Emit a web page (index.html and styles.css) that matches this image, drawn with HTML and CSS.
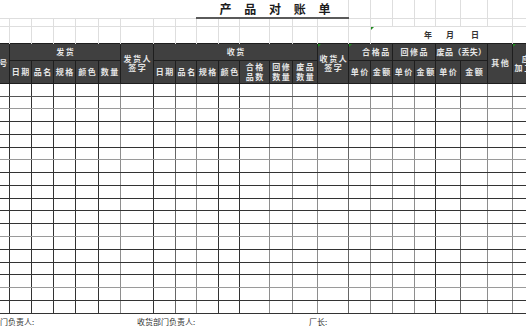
FILE: index.html
```html
<!DOCTYPE html>
<html lang="zh">
<head>
<meta charset="utf-8">
<title>产品对账单</title>
<link rel="stylesheet" href="styles.css">
</head>
<body>
<table class="sheet">
<colgroup>
<col class="w22"><col class="w22"><col class="w22"><col class="w22"><col class="w23"><col class="w22"><col class="w33"><col class="w22"><col class="w21"><col class="w22"><col class="w21"><col class="w30"><col class="w23"><col class="w25"><col class="w31"><col class="w22"><col class="w22"><col class="w22"><col class="w21"><col class="w25"><col class="w27"><col class="w25"><col class="w36">
</colgroup>
<tbody class="top">
<tr class="row-a"><td class="blank" colspan="9"></td><td class="title" colspan="6">产 品 对 账 单</td><td></td><td></td><td></td><td></td><td></td><td></td><td></td><td></td></tr>
<tr class="row-b"><td></td><td></td><td></td><td></td><td></td><td></td><td></td><td></td><td></td><td></td><td></td><td></td><td></td><td></td><td></td><td></td><td></td><td></td><td></td><td></td><td></td><td></td><td></td></tr>
<tr class="row-c"><td></td><td></td><td></td><td></td><td></td><td></td><td></td><td></td><td></td><td></td><td></td><td></td><td></td><td></td><td></td><td></td><td class="date mark" colspan="6"><span>年</span><span class="m">月</span><span class="d">日</span></td><td></td></tr>
</tbody>
<tbody class="hd">
<tr class="h1">
<td rowspan="2">序号</td>
<td colspan="5">发货</td>
<td rowspan="2">发货人<br>签字</td>
<td colspan="7">收货</td>
<td rowspan="2" class="mark">收货人<br>签字</td>
<td colspan="2" class="mark shift">合格品</td>
<td colspan="2">回修品</td>
<td colspan="2" class="tight">废品（丢失）</td>
<td rowspan="2">其他</td>
<td rowspan="2" class="mark last">应付<br>加工费用</td>
</tr>
<tr class="h2">
<td>日期</td><td>品名</td><td>规格</td><td>颜色</td><td>数量</td>
<td>日期</td><td>品名</td><td>规格</td><td>颜色</td>
<td><div class="clip">合格<br>品数<br>量</div></td>
<td>回修<br>数量</td><td>废品<br>数量</td>
<td>单价</td><td>金额</td><td>单价</td><td>金额</td><td>单价</td><td>金额</td>
</tr>
</tbody>
<tbody class="bd">
<tr><td></td><td></td><td></td><td></td><td></td><td></td><td></td><td></td><td></td><td></td><td></td><td></td><td></td><td></td><td></td><td></td><td></td><td></td><td></td><td></td><td></td><td></td><td></td></tr>
<tr><td></td><td></td><td></td><td></td><td></td><td></td><td></td><td></td><td></td><td></td><td></td><td></td><td></td><td></td><td></td><td></td><td></td><td></td><td></td><td></td><td></td><td></td><td></td></tr>
<tr><td></td><td></td><td></td><td></td><td></td><td></td><td></td><td></td><td></td><td></td><td></td><td></td><td></td><td></td><td></td><td></td><td></td><td></td><td></td><td></td><td></td><td></td><td></td></tr>
<tr><td></td><td></td><td></td><td></td><td></td><td></td><td></td><td></td><td></td><td></td><td></td><td></td><td></td><td></td><td></td><td></td><td></td><td></td><td></td><td></td><td></td><td></td><td></td></tr>
<tr><td></td><td></td><td></td><td></td><td></td><td></td><td></td><td></td><td></td><td></td><td></td><td></td><td></td><td></td><td></td><td></td><td></td><td></td><td></td><td></td><td></td><td></td><td></td></tr>
<tr><td></td><td></td><td></td><td></td><td></td><td></td><td></td><td></td><td></td><td></td><td></td><td></td><td></td><td></td><td></td><td></td><td></td><td></td><td></td><td></td><td></td><td></td><td></td></tr>
<tr><td></td><td></td><td></td><td></td><td></td><td></td><td></td><td></td><td></td><td></td><td></td><td></td><td></td><td></td><td></td><td></td><td></td><td></td><td></td><td></td><td></td><td></td><td></td></tr>
<tr><td></td><td></td><td></td><td></td><td></td><td></td><td></td><td></td><td></td><td></td><td></td><td></td><td></td><td></td><td></td><td></td><td></td><td></td><td></td><td></td><td></td><td></td><td></td></tr>
<tr><td></td><td></td><td></td><td></td><td></td><td></td><td></td><td></td><td></td><td></td><td></td><td></td><td></td><td></td><td></td><td></td><td></td><td></td><td></td><td></td><td></td><td></td><td></td></tr>
<tr><td></td><td></td><td></td><td></td><td></td><td></td><td></td><td></td><td></td><td></td><td></td><td></td><td></td><td></td><td></td><td></td><td></td><td></td><td></td><td></td><td></td><td></td><td></td></tr>
<tr><td></td><td></td><td></td><td></td><td></td><td></td><td></td><td></td><td></td><td></td><td></td><td></td><td></td><td></td><td></td><td></td><td></td><td></td><td></td><td></td><td></td><td></td><td></td></tr>
<tr><td></td><td></td><td></td><td></td><td></td><td></td><td></td><td></td><td></td><td></td><td></td><td></td><td></td><td></td><td></td><td></td><td></td><td></td><td></td><td></td><td></td><td></td><td></td></tr>
<tr><td></td><td></td><td></td><td></td><td></td><td></td><td></td><td></td><td></td><td></td><td></td><td></td><td></td><td></td><td></td><td></td><td></td><td></td><td></td><td></td><td></td><td></td><td></td></tr>
<tr><td></td><td></td><td></td><td></td><td></td><td></td><td></td><td></td><td></td><td></td><td></td><td></td><td></td><td></td><td></td><td></td><td></td><td></td><td></td><td></td><td></td><td></td><td></td></tr>
<tr><td></td><td></td><td></td><td></td><td></td><td></td><td></td><td></td><td></td><td></td><td></td><td></td><td></td><td></td><td></td><td></td><td></td><td></td><td></td><td></td><td></td><td></td><td></td></tr>
<tr><td></td><td></td><td></td><td></td><td></td><td></td><td></td><td></td><td></td><td></td><td></td><td></td><td></td><td></td><td></td><td></td><td></td><td></td><td></td><td></td><td></td><td></td><td></td></tr>
<tr><td></td><td></td><td></td><td></td><td></td><td></td><td></td><td></td><td></td><td></td><td></td><td></td><td></td><td></td><td></td><td></td><td></td><td></td><td></td><td></td><td></td><td></td><td></td></tr>
<tr><td></td><td></td><td></td><td></td><td></td><td></td><td></td><td></td><td></td><td></td><td></td><td></td><td></td><td></td><td></td><td></td><td></td><td></td><td></td><td></td><td></td><td></td><td></td></tr>
</tbody>
</table>
<div class="foot">
<span class="f1">发货部门负责人:</span>
<span class="f2">收货部门负责人:</span>
<span class="f3">厂长:</span>
</div>
</body>
</html>
```

FILE: styles.css
```css
html, body {
  margin: 0;
  padding: 0;
  overflow: hidden;
  background: #fff;
}
body {
  width: 526px;
  height: 326px;
  font-family: "Noto Sans CJK SC", "Noto Sans", sans-serif;
  color: #222;
}
.sheet {
  border-collapse: collapse;
  table-layout: fixed;
  width: 561px;
  margin-left: -13px;
}
.sheet td {
  padding: 0;
  overflow: hidden;
}
.w21 { width: 21px; }
.w22 { width: 22px; }
.w23 { width: 23px; }
.w25 { width: 25px; }
.w27 { width: 27px; }
.w30 { width: 30px; }
.w31 { width: 31px; }
.w33 { width: 33px; }
.w36 { width: 36px; }

/* top spreadsheet area */
.top td {
  border: 1px solid #dedede;
  border-bottom: none;
}
.row-a { height: 18px; }
.row-b { height: 8px; }
.row-c { height: 17px; }
.row-a td { border-top: none; }
.row-a .blank { border-left: none; border-right: none; }
.row-a .title {
  border-left: none;
  border-bottom: 2px solid #5a5a5a;
  font-size: 12px;
  font-weight: 700;
  letter-spacing: 5px;
  line-height: 16px;
  padding-left: 23px;
  color: #1c1c1c;
  white-space: nowrap;
}
.date {
  font-size: 8px;
  font-weight: 700;
  color: #333;
  padding-left: 53px !important;
  white-space: nowrap;
  line-height: 14px;
}
.date .m { margin-left: 14px; }
.date .d { margin-left: 17px; }

.mark { position: relative; }
.mark::before {
  content: "";
  position: absolute;
  top: 0;
  left: 0;
  border-top: 3px solid #1f8a1f;
  border-right: 3px solid transparent;
}

/* header */
.hd td {
  background: #404040;
  color: #e6e6e6;
  font-weight: 700;
  font-size: 8px;
  letter-spacing: 1.6px;
  text-align: center;
  vertical-align: middle;
  border: 1px solid #1e1e1e;
  white-space: nowrap;
  padding-left: 1.6px;
}
.h1 { height: 17px; }
.h1 td { line-height: 9.5px; }
.h2 { height: 23.3px; }
.h2 td { line-height: 10px; }
.hd .shift { padding-left: 12px; }
.hd .tight { letter-spacing: 0.3px; padding-left: 0; }
.hd .last { line-height: 9.5px; }
.clip {
  height: 22px;
  overflow: hidden;
  padding-top: 1px;
  box-sizing: border-box;
}

/* body grid */
.bd tr { height: 12.78px; }
.bd td { border: 1px solid #333; }
.bd td:nth-child(8),
.bd td:nth-child(15),
.bd td:nth-child(20) { border-right-color: #666; }
.bd td:nth-child(6),
.bd td:nth-child(9),
.bd td:nth-child(12),
.bd td:nth-child(13),
.bd td:nth-child(14),
.bd td:nth-child(16),
.bd td:nth-child(17),
.bd td:nth-child(18),
.bd td:nth-child(21),
.bd td:nth-child(22) { border-right-color: #8e8e8e; }
.bd tr:nth-child(1) td { border-bottom-color: #555; }
.bd tr:nth-child(2) td,
.bd tr:nth-child(6) td,
.bd tr:nth-child(12) td,
.bd tr:nth-child(16) td { border-bottom-color: #9a9a9a; }

/* footer */
.foot {
  display: flex;
  margin-left: -24px;
  height: 13px;
  padding-top: 1px;
  font-size: 8px;
  line-height: 13px;
  color: #333;
  white-space: nowrap;
}
.f1 { width: 161px; }
.f2 { width: 172px; }
```
